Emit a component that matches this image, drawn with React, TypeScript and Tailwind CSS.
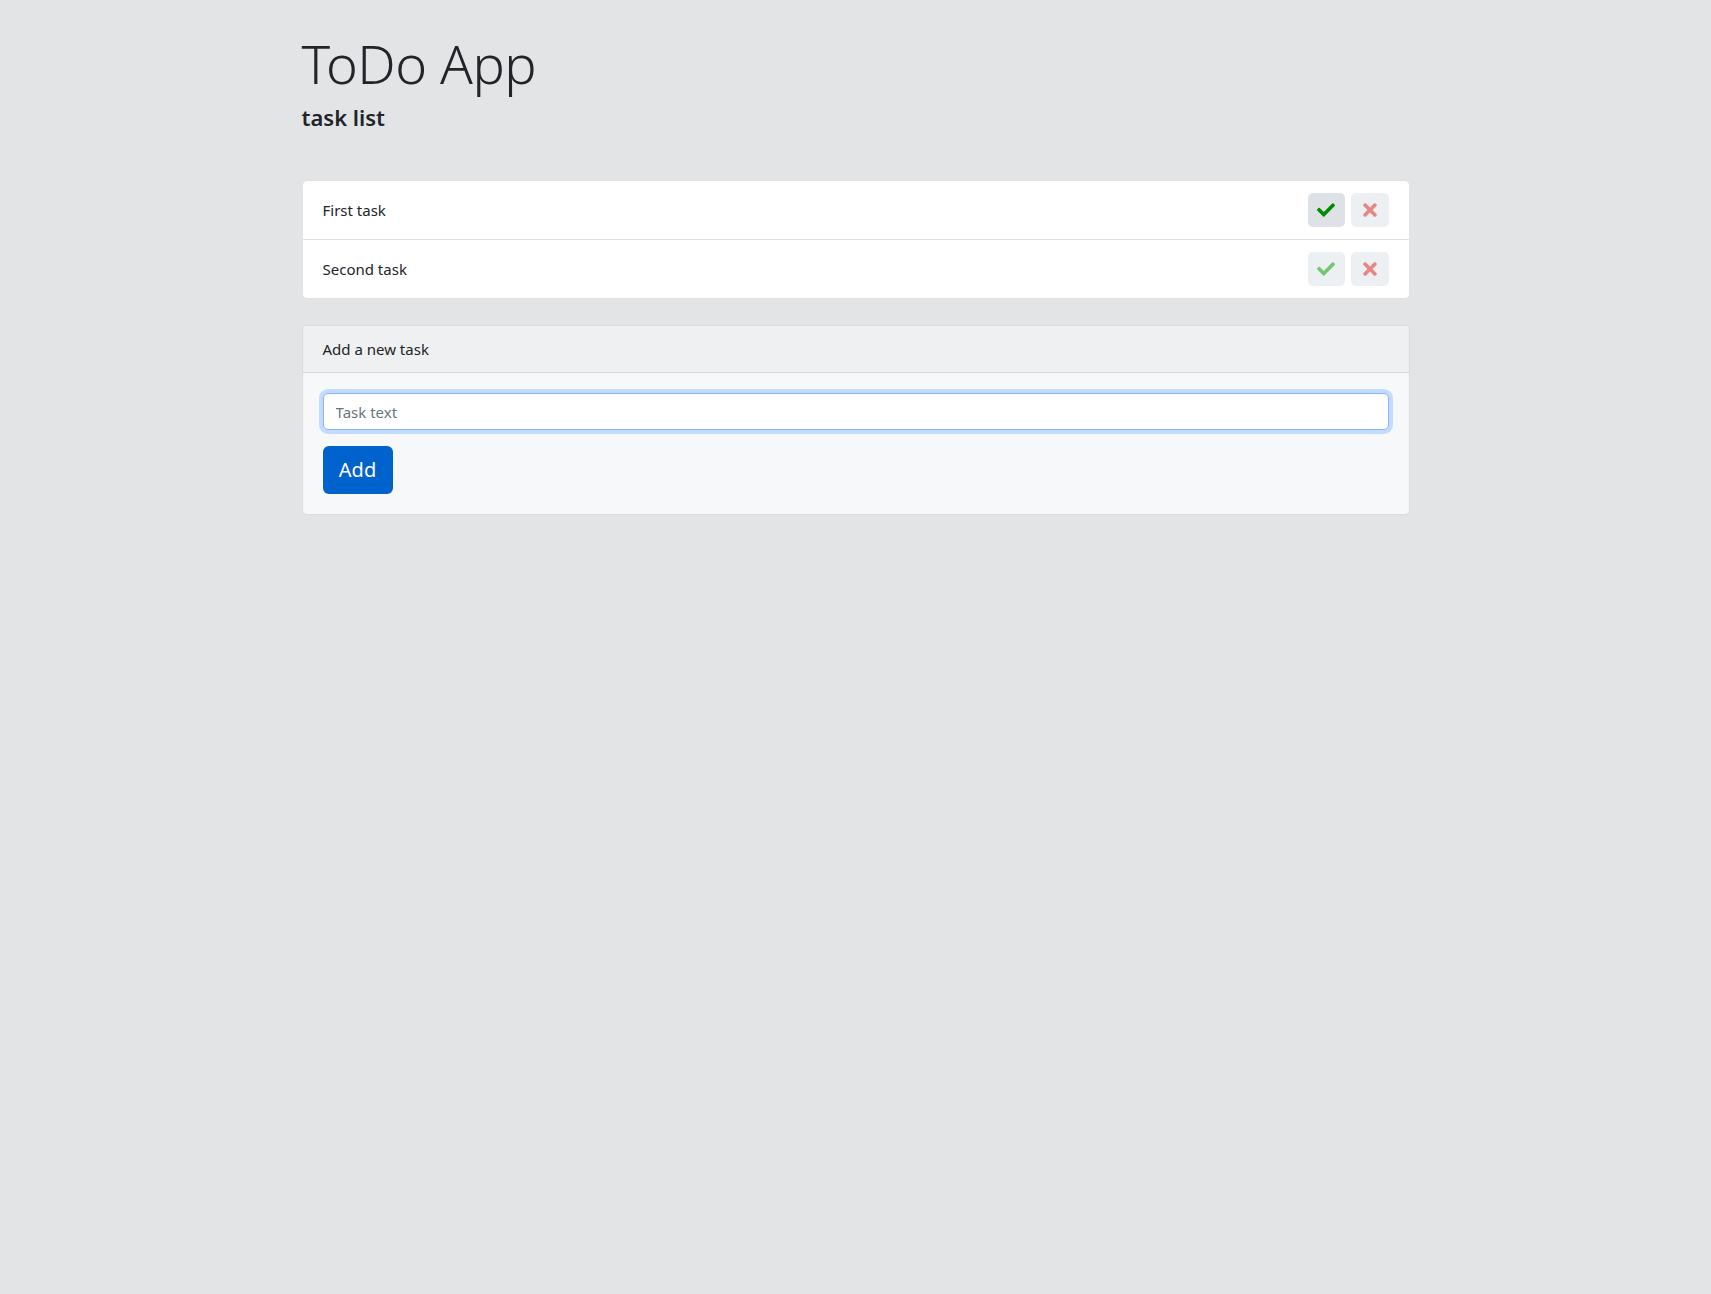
import { FaCheck, FaTimes } from "react-icons/fa";

const tasks = [
  { id: 1, text: "First task", hover: true },
  { id: 2, text: "Second task", hover: false },
];

const TaskRow = ({ text, hover, last }: { text: string; hover: boolean; last: boolean }) => (
  <li
    className={`flex items-center justify-between px-5 py-3 ${last ? "" : "border-b border-[#dfe1e4]"}`}
  >
    <span className="text-[15px] text-[#212529]">{text}</span>
    <div className="flex gap-[6px]">
      <button
        className={`w-[37px] h-[34px] rounded-[5px] flex items-center justify-center ${
          hover ? "bg-[#dee2e6] text-[#008a00]" : "bg-[#edf0f3] text-[#72c872]"
        }`}
      >
        <FaCheck size={18} />
      </button>
      <button className="w-[38px] h-[34px] rounded-[5px] flex items-center justify-center bg-[#edf0f3] text-[#e88585]">
        <FaTimes size={20} />
      </button>
    </div>
  </li>
);

export default function App() {
  return (
    <div className="min-h-screen bg-[#e3e4e6] font-['Segoe_UI','Noto_Sans',sans-serif] text-[#212529]">
      <div className="w-[1108px] mx-auto pt-[31px]">
        <h1 className="text-[54px] font-light leading-[1.2] tracking-[-0.5px]">ToDo App</h1>
        <h2 className="text-[22px] font-semibold leading-[1.2] mt-[8px]">task list</h2>

        <ul className="mt-[50px] bg-white border border-[#dfe1e4] rounded-[5px]">
          {tasks.map((t, i) => (
            <TaskRow key={t.id} text={t.text} hover={t.hover} last={i === tasks.length - 1} />
          ))}
        </ul>

        <div className="mt-[26px] border border-[#d9dbde] rounded-[5px] bg-[#f7f8fa] overflow-hidden">
          <div className="px-5 py-3 bg-[#eff0f2] border-b border-[#d6d8db] text-[15px] leading-[22px]">
            Add a new task
          </div>
          <div className="p-5">
            <input
              type="text"
              placeholder="Task text"
              className="w-full h-[37px] px-3 text-[15px] bg-white border border-[#86b7fe] rounded-[5px] outline-none ring-4 ring-[#c2dbfe] placeholder:text-[#6c757d]"
            />
            <button className="mt-[16px] w-[70px] h-[48px] rounded-[6px] bg-[#0062cc] text-white text-[20px]">
              Add
            </button>
          </div>
        </div>
      </div>
    </div>
  );
}
